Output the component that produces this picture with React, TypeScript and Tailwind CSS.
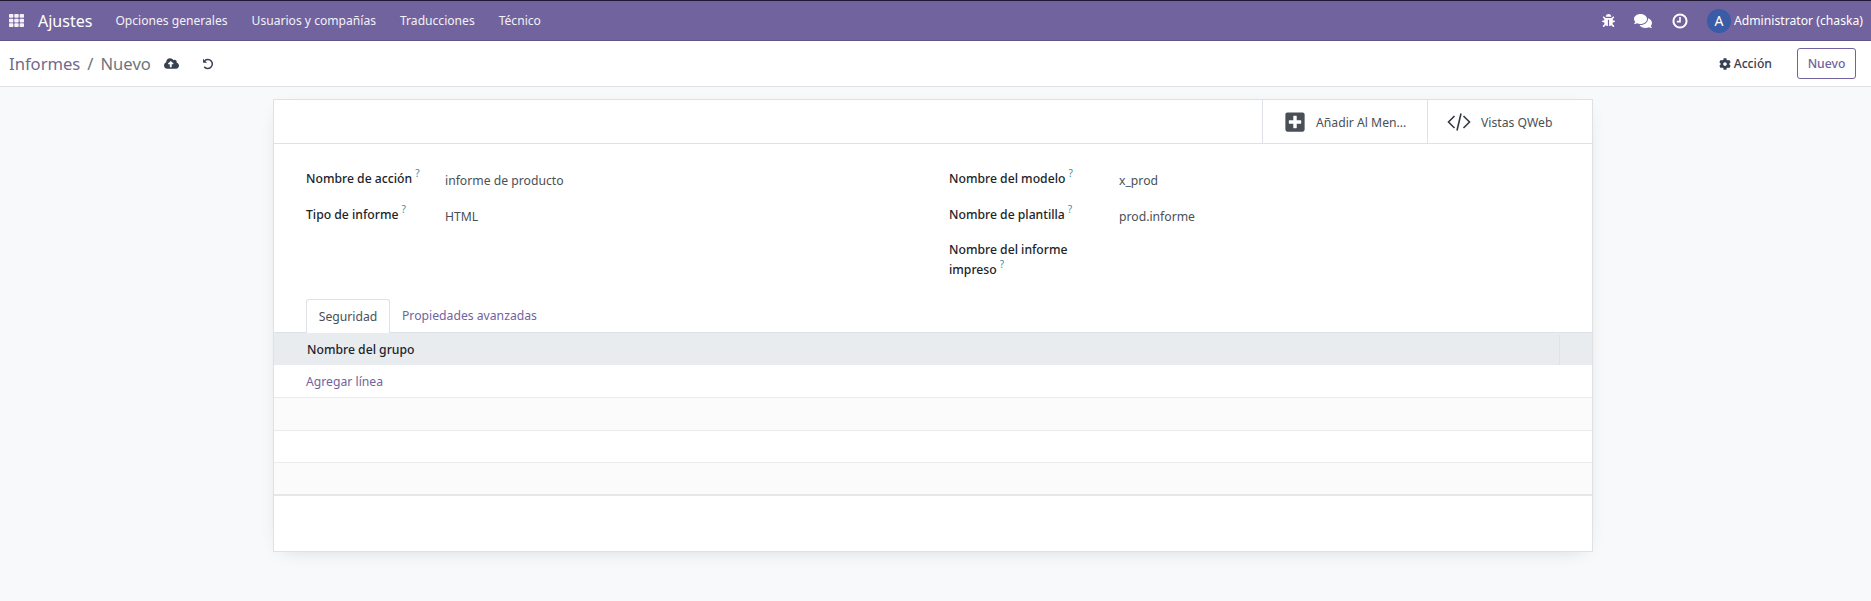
import { FaBug, FaCloudUploadAlt, FaCog, FaComments, FaPlusSquare, FaTh } from "react-icons/fa";

const menus = ["Opciones generales", "Usuarios y compañías", "Traducciones", "Técnico"];

function Help() {
    return <sup className="ml-[3px] text-[10px] font-normal text-[#3f8ea3] align-baseline relative -top-[6px]">?</sup>;
}

function Field({ label, value, labelWidth }: { label: string; value?: string; labelWidth: string }) {
    return (
        <div className="flex items-start min-h-[35.5px]">
            <div className={`${labelWidth} shrink-0 font-[550] text-[#212529] leading-[20px] pr-3`}>
                {label}
                <Help />
            </div>
            {value && <div className="text-[#495057] leading-[20px] pt-[2px]">{value}</div>}
        </div>
    );
}

function TableRow({ striped, last }: { striped?: boolean; last?: boolean }) {
    return <div className={`h-[32.75px] border-b ${last ? "border-b-2 border-[#e5e8eb]" : "border-[#e9ecef]"} ${striped ? "bg-[#fbfbfb]" : "bg-white"}`}></div>;
}

export default function App() {
    return (
        <div className="h-[601px] flex flex-col bg-[#f8f9fa] text-[12.2px] overflow-hidden" style={{ fontFamily: '"Noto Sans", sans-serif' }}>
            {/* Navbar */}
            <header className="h-[41px] shrink-0 bg-[#71639e] border-t border-t-[#1f1a33] border-b border-b-[#5f5387] flex items-center text-white">
                <FaTh className="ml-[9px] text-[15px] text-[#f4f2f8]" />
                <span className="ml-[14px] text-[16px] leading-none">Ajustes</span>
                <nav className="ml-[23px] pt-[2px] flex gap-[24px] text-[12.1px]">
                    {menus.map((m) => (
                        <span key={m} className="text-[#f3f1f7]">{m}</span>
                    ))}
                </nav>
                <div className="ml-auto flex items-center mr-[8px]">
                    <FaBug className="text-[13px]" />
                    <FaComments className="ml-[19px] text-[18px]" />
                    <ClockIcon />
                    <div className="ml-[19px] w-[24px] h-[24px] rounded-full bg-[#3a5ba6] flex items-center justify-center text-[14px]">A</div>
                    <span className="ml-[3px] pt-[1px]">Administrator (chaska)</span>
                </div>
            </header>

            {/* Control panel */}
            <div className="h-[46px] shrink-0 bg-white border-b border-[#dee2e6] flex items-center">
                <span className="ml-[9px] pt-[2px] text-[16.6px] text-[#6f6a8c]">Informes</span>
                <span className="mx-[7px] pt-[2px] text-[16.6px] text-[#6c757d]">/</span>
                <span className="pt-[2px] text-[16.6px] text-[#6c757d]">Nuevo</span>
                <FaCloudUploadAlt className="ml-[13px] text-[15px] text-[#374151]" />
                <UndoIcon />
                <div className="ml-auto flex items-center mr-[15px]">
                    <FaCog className="text-[12px] text-[#374151]" />
                    <span className="ml-[3px] pt-[2px] font-[550] text-[#374151]">Acción</span>
                    <button className="ml-[25px] pt-[1px] h-[31px] w-[59px] rounded-[3px] border border-[#71639e] text-[#71639e] font-medium">Nuevo</button>
                </div>
            </div>

            {/* Sheet */}
            <div className="flex-1 flex items-start pt-[12px]">
                <div className="ml-[273px] w-[1320px] h-[453px] bg-white border border-[#dee2e6] shadow-[0_5px_20px_-10px_rgba(0,0,0,0.2)] flex flex-col">
                    {/* Button box */}
                    <div className="h-[44px] shrink-0 border-b border-[#dee2e6] flex justify-end">
                        <div className="w-[165px] border-l border-[#dee2e6] flex items-center text-[#495057]">
                            <FaPlusSquare className="ml-[21px] text-[22px] text-[#4a4f57]" />
                            <span className="ml-[10px] pt-[3px]">Añadir Al Men...</span>
                        </div>
                        <div className="w-[165px] border-l border-[#dee2e6] flex items-center text-[#495057]">
                            <CodeIcon />
                            <span className="ml-[10px] pt-[3px]">Vistas QWeb</span>
                        </div>
                    </div>

                    {/* Fields */}
                    <div className="h-[155px] shrink-0 flex pl-[32px] pt-[25px]">
                        <div className="w-[643px]">
                            <Field label="Nombre de acción" value="informe de producto" labelWidth="w-[139px]" />
                            <Field label="Tipo de informe" value="HTML" labelWidth="w-[139px]" />
                        </div>
                        <div>
                            <Field label="Nombre del modelo" value="x_prod" labelWidth="w-[170px]" />
                            <Field label="Nombre de plantilla" value="prod.informe" labelWidth="w-[170px]" />
                            <Field label="Nombre del informe impreso" labelWidth="w-[170px]" />
                        </div>
                    </div>

                    {/* Tabs */}
                    <div className="h-[34px] shrink-0 flex pl-[32px] border-b border-[#dee2e6]">
                        <div className="w-[84px] h-[34px] pt-[2px] bg-white border border-b-0 border-[#dee2e6] rounded-t-[3px] flex items-center justify-center text-[#495057]">Seguridad</div>
                        <div className="ml-[12px] pt-[2px] flex items-center text-[#71639e]">Propiedades avanzadas</div>
                    </div>

                    {/* List */}
                    <div className="h-[32px] shrink-0 pt-[2px] bg-[#e9ecef] flex items-center">
                        <div className="flex-1 pl-[33px] font-[550] text-[#212529]">Nombre del grupo</div>
                        <div className="w-[33px] h-full border-l border-[#dee2e6]"></div>
                    </div>
                    <div className="h-[32.75px] pt-[2px] border-b border-[#e9ecef] flex items-center pl-[32px] text-[#71639e]">Agregar línea</div>
                    <TableRow striped />
                    <TableRow />
                    <TableRow striped last />
                </div>
            </div>
        </div>
    );
}

function ClockIcon() {
    return (
        <svg viewBox="0 0 16 16" className="ml-[20px] w-[16px] h-[16px]" fill="none" stroke="currentColor">
            <circle cx="8" cy="8" r="6.6" strokeWidth="2" />
            <path d="M8 4v4.6H4.8" strokeWidth="1.6" />
        </svg>
    );
}

function UndoIcon() {
    return (
        <svg viewBox="0 0 16 16" className="ml-[23px] w-[12px] h-[12px] text-[#374151]" fill="none" stroke="currentColor" strokeWidth="2">
            <path d="M3.6 3.6A6 6 0 1 1 3 11.6" />
            <path d="M1.4 1v5.4h5.4z" fill="currentColor" stroke="none" />
        </svg>
    );
}

function CodeIcon() {
    return (
        <svg viewBox="0 0 24 24" className="ml-[19px] w-[24px] h-[24px] text-[#343a40]" fill="none" stroke="currentColor" strokeWidth="1.6">
            <path d="M7.5 6 1.5 12l6 6M16.5 6l6 6-6 6M14 3.5l-4 17" />
        </svg>
    );
}
